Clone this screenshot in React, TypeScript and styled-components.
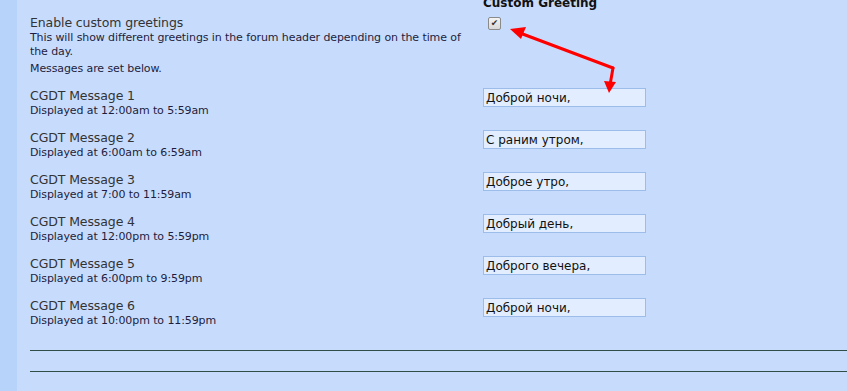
import React from "react";
import styled, { createGlobalStyle } from "styled-components";

const Global = createGlobalStyle`
  html, body { margin: 0; padding: 0; background: #c7dcfc; }
  body { font-family: "DejaVu Sans", Verdana, sans-serif; overflow: hidden; }
`;

const Page = styled.div`
  display: flex;
  width: 847px;
  height: 391px;
  overflow: hidden;
  background: #c7dcfc;
`;

const Strip = styled.div`
  width: 17px;
  flex: none;
  background: #b8d3fa;
`;

const Content = styled.div`
  position: relative;
  flex: 1;
  padding-left: 13px;
  margin-top: -5px;
`;

const Grid = styled.div`
  display: grid;
  grid-template-columns: 453px 163px;
  row-gap: 12px;
`;

const Header = styled.div`
  grid-column: 2;
  font: bold 12px "DejaVu Sans", Verdana, sans-serif;
  color: #111;
  white-space: nowrap;
  line-height: 16px;
  margin-bottom: -8px;
`;

const Label = styled.div`
  display: flex;
  flex-direction: column;
  max-width: 440px;
`;

const Title = styled.div`
  font-size: 12.5px;
  line-height: 16px;
  color: #333;
  letter-spacing: -0.1px;
`;

const Desc = styled.div<{ $gap?: number }>`
  font-size: 11px;
  line-height: 14px;
  color: #1f1d3d;
  letter-spacing: -0.1px;
  margin-top: ${(p) => p.$gap ?? 0}px;
`;

const Field = styled.div`
  display: flex;
  align-items: flex-start;
`;

const Check = styled.span`
  display: inline-flex;
  align-items: center;
  justify-content: center;
  width: 11px;
  height: 11px;
  margin-left: 5px;
  margin-top: 2px;
  border: 1px solid #8a8a8a;
  border-radius: 2px;
  background: linear-gradient(#f4f4f4, #d8d8d8);
  font-size: 9px;
  line-height: 1;
  color: #333;
`;

const Input = styled.input`
  box-sizing: border-box;
  width: 163px;
  height: 19px;
  margin: 0;
  padding: 0 2px;
  border: 1px solid #9cbde9;
  background: #e2eeff;
  font: 12px "DejaVu Sans", Verdana, sans-serif;
  color: #111;
  outline: none;
`;

const Rule = styled.hr`
  margin: 0;
  border: 0;
  border-top: 1px solid #2f4f46;
`;

const Rules = styled.div`
  display: flex;
  flex-direction: column;
  gap: 20px;
  margin-top: 22px;
`;

const Arrow = styled.svg`
  position: absolute;
  left: 0;
  top: 0;
  pointer-events: none;
`;

const messages = [
  { n: 1, time: "12:00am to 5:59am", value: "Доброй ночи," },
  { n: 2, time: "6:00am to 6:59am", value: "С раним утром," },
  { n: 3, time: "7:00 to 11:59am", value: "Доброе утро," },
  { n: 4, time: "12:00pm to 5:59pm", value: "Добрый день," },
  { n: 5, time: "6:00pm to 9:59pm", value: "Доброго вечера," },
  { n: 6, time: "10:00pm to 11:59pm", value: "Доброй ночи," },
];

export default function App() {
  return (
    <Page>
      <Global />
      <Strip />
      <Content>
        <Grid>
          <Header>Custom Greeting</Header>
          <Label>
            <Title>Enable custom greetings</Title>
            <Desc>This will show different greetings in the forum header depending on the time of the day.</Desc>
            <Desc $gap={3}>Messages are set below.</Desc>
          </Label>
          <Field>
            <Check>✔</Check>
          </Field>
          {messages.map((m) => (
            <React.Fragment key={m.n}>
              <Label>
                <Title>CGDT Message {m.n}</Title>
                <Desc>Displayed at {m.time}</Desc>
              </Label>
              <Field>
                <Input defaultValue={m.value} />
              </Field>
            </React.Fragment>
          ))}
        </Grid>
        <Rules>
          <Rule />
          <Rule />
        </Rules>
        <Arrow width="830" height="120" viewBox="0 0 830 120">
          <g stroke="#f00" strokeWidth="3" fill="#f00" strokeLinecap="round">
            <line x1="596" y1="73" x2="503" y2="38" />
            <polygon points="493,34 509,32 504,44" stroke="none" />
            <line x1="596" y1="73" x2="593" y2="90" />
            <polygon points="592,98 587,86 599,87" stroke="none" />
          </g>
        </Arrow>
      </Content>
    </Page>
  );
}
